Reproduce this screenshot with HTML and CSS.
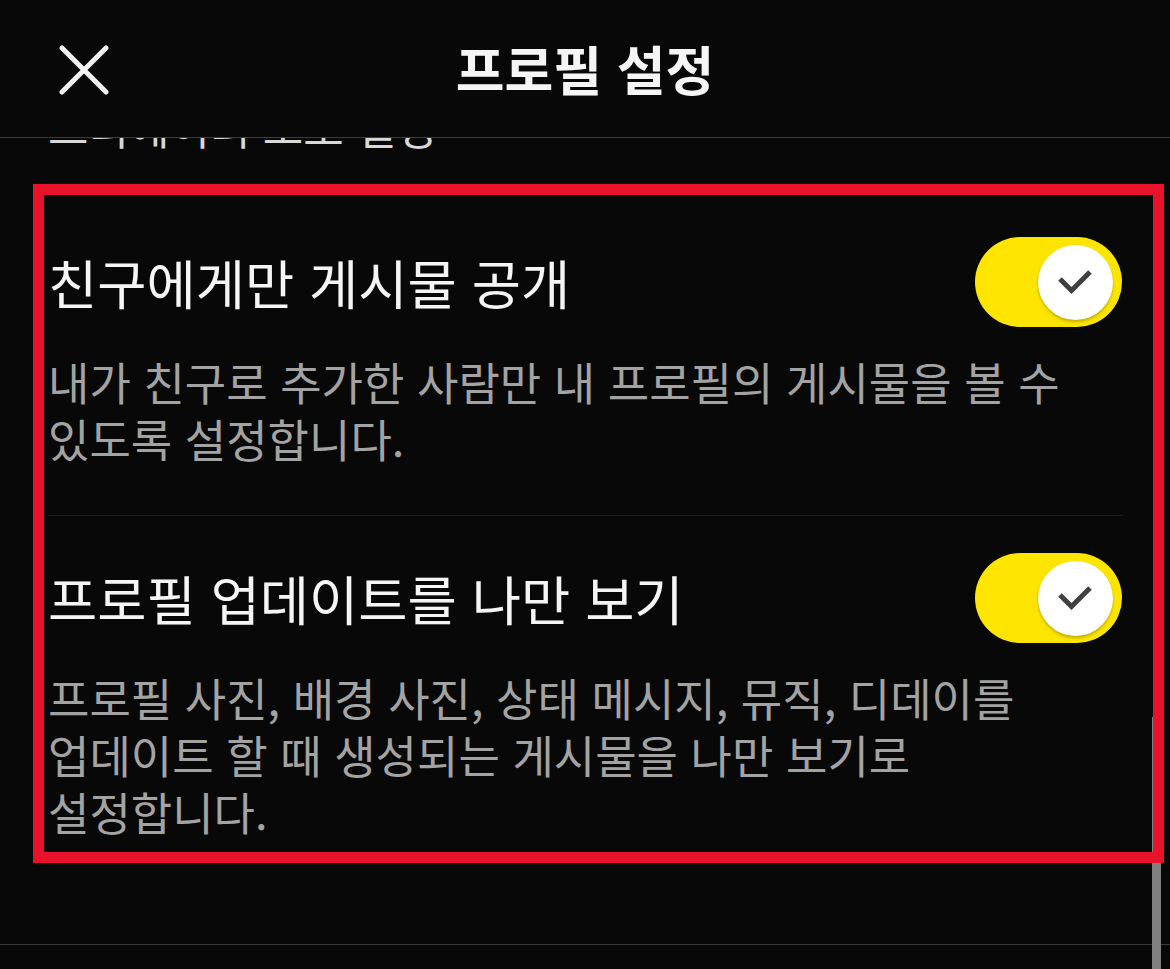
FILE: index.html
```html
<!DOCTYPE html>
<html lang="ko">
<head>
  <meta charset="UTF-8" />
  <title>프로필 설정</title>
  <link rel="stylesheet" href="styles.css">
</head>
<body>
  <div class="screen">
    <header class="top-bar">
      <button class="close" type="button" aria-label="닫기">
        <svg width="50" height="50" viewBox="0 0 50 50">
          <path d="M3 3 L47 47 M47 3 L3 47" stroke="#f2f2f2" stroke-width="5" stroke-linecap="round" fill="none"/>
        </svg>
      </button>
      <h1>프로필 설정</h1>
      <span></span>
    </header>

    <main class="list">
      <p class="clipped">크리에이터 보호 설정</p>

      <section class="item first">
        <div class="item-head">
          <h3>친구에게만 게시물 공개</h3>
          <span class="toggle on">
            <span class="knob">
              <svg width="75" height="75" viewBox="0 0 75 75">
                <path d="M22 34 L33.5 45.5 L52 27" stroke="#404040" stroke-width="5" fill="none"/>
              </svg>
            </span>
          </span>
        </div>
        <p class="desc">내가 친구로 추가한 사람만 내 프로필의 게시물을 볼 수<br>있도록 설정합니다.</p>
      </section>

      <section class="item">
        <div class="item-head">
          <h3>프로필 업데이트를 나만 보기</h3>
          <span class="toggle on">
            <span class="knob">
              <svg width="75" height="75" viewBox="0 0 75 75">
                <path d="M22 34 L33.5 45.5 L52 27" stroke="#404040" stroke-width="5" fill="none"/>
              </svg>
            </span>
          </span>
        </div>
        <p class="desc">프로필 사진, 배경 사진, 상태 메시지, 뮤직, 디데이를<br>업데이트 할 때 생성되는 게시물을 나만 보기로<br>설정합니다.</p>
      </section>
    </main>

    <div class="scrollbar"></div>
    <div class="highlight"></div>
  </div>
</body>
</html>
```

FILE: styles.css
```css
body {
  margin: 0;
  background: #080808;
  color: #f5f5f5;
  font-family: "Noto Sans CJK KR", "Noto Sans", sans-serif;
}

.screen {
  position: relative;
  width: 1170px;
  height: 969px;
  overflow: hidden;
}

.top-bar {
  height: 137px;
  border-bottom: 1px solid #3c3c3c;
  display: grid;
  grid-template-columns: 1fr auto 1fr;
  align-items: center;
}

.close {
  justify-self: start;
  margin-left: 59px;
  margin-top: 2px;
  padding: 0;
  width: 50px;
  height: 50px;
  border: none;
  background: none;
  display: flex;
}

.top-bar h1 {
  margin: 0;
  font-size: 53px;
  font-weight: 700;
  line-height: 1;
  color: #f5f5f5;
}

.list {
  height: 806px;
  border-bottom: 1px solid #3a3a3a;
  overflow: hidden;
}

/* tail of the row scrolled under the header */
.clipped {
  margin: -40px 48px 0;
  font-size: 44px;
  line-height: 57px;
  color: #d8d8d8;
}

.item {
  margin: 0 48px;
  padding-top: 37px;
}

.item.first {
  padding-top: 82px;
  padding-bottom: 48px;
  border-bottom: 1px solid #1f1f1f;
}

.item-head {
  display: flex;
  align-items: center;
  justify-content: space-between;
  height: 90px;
}

.item-head h3 {
  margin: 0;
  font-size: 53.5px;
  font-weight: 400;
  line-height: 90px;
  color: #f5f5f5;
}

.toggle {
  width: 147px;
  height: 90px;
  border-radius: 45px;
  background: #fee500;
  display: flex;
  align-items: center;
  justify-content: flex-end;
  padding-right: 9px;
  box-sizing: border-box;
}

.knob {
  width: 75px;
  height: 75px;
  border-radius: 50%;
  background: #ffffff;
  box-shadow: 0 2px 3px rgba(0, 0, 0, 0.25);
  display: flex;
}

.desc {
  margin: 26px 0 0;
  font-size: 45px;
  line-height: 57px;
  color: #a3a3a3;
}

.scrollbar {
  position: absolute;
  left: 1152px;
  top: 717px;
  width: 9px;
  height: 252px;
  background: #808080;
}

.highlight {
  position: absolute;
  left: 33px;
  top: 184px;
  width: 1131px;
  height: 679px;
  border: 11px solid #e8132b;
  box-sizing: border-box;
}
```
